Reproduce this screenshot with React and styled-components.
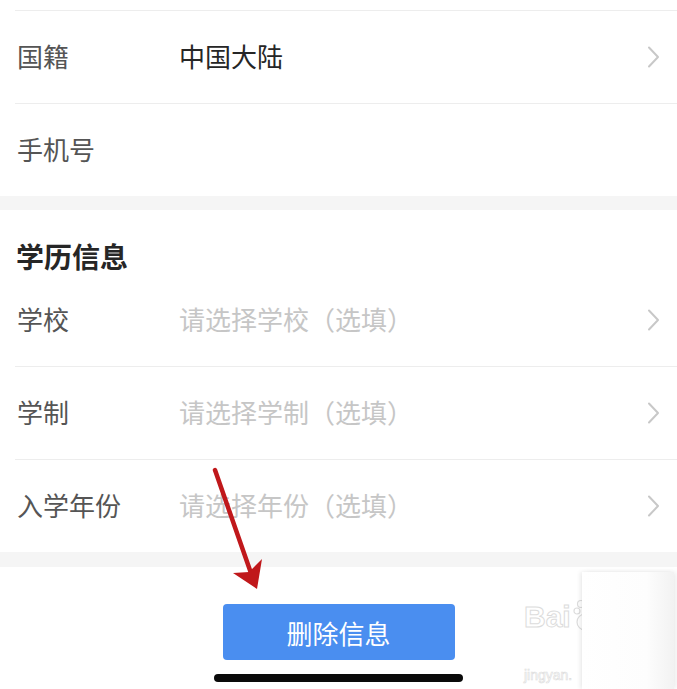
import React from "react";
import styled, { createGlobalStyle } from "styled-components";

const Global = createGlobalStyle`
  html, body { margin: 0; padding: 0; background: #ffffff; }
  body { font-family: "Noto Sans CJK SC", "Noto Sans", sans-serif; }
  * { box-sizing: border-box; }
`;

const Page = styled.div`
  position: relative;
  width: 677px;
  height: 689px;
  overflow: hidden;
  background: #ffffff;
  display: flex;
  flex-direction: column;
`;

const Section = styled.section`
  background: #ffffff;
  padding-top: ${(p) => p.$top || 0}px;
`;

const Gap = styled.div`
  height: ${(p) => p.$h}px;
  background: #f5f5f5;
`;

const Heading = styled.h2`
  margin: 0;
  padding: 30px 0 0 16px;
  height: 64px;
  font-size: 28px;
  line-height: 32px;
  font-weight: 700;
  color: #262626;
`;

const Row = styled.div`
  margin-left: 15px;
  padding: 0 17px 4px 2px;
  height: ${(p) => (p.$border ? 93 : 92)}px;
  border-top: ${(p) => (p.$border ? "1px solid #ededed" : "none")};
  display: flex;
  align-items: center;
`;

const Label = styled.span`
  width: 162px;
  flex: none;
  font-size: 26px;
  color: #555555;
`;

const Value = styled.span`
  flex: 1;
  font-size: 26px;
  color: ${(p) => (p.$placeholder ? "#c6c6c6" : "#262626")};
`;

const Chevron = styled.svg`
  width: 13px;
  height: 22px;
  flex: none;
  margin-top: 4px;
`;

const Footer = styled.div`
  flex: 1;
  display: flex;
  flex-direction: column;
  align-items: center;
  padding-top: 37px;
`;

const DeleteButton = styled.button`
  width: 232px;
  height: 56px;
  border: none;
  border-radius: 4px;
  background: #4a8ef0;
  color: #ffffff;
  font-family: inherit;
  font-size: 26px;
  padding: 0;
`;

const HomeBar = styled.div`
  margin-top: 14px;
  width: 249px;
  height: 8px;
  border-radius: 4px;
  background: #0a0a0a;
`;

const ArrowLayer = styled.svg`
  position: absolute;
  left: 0;
  top: 0;
  width: 677px;
  height: 689px;
  pointer-events: none;
`;

const Shade = styled.div`
  position: absolute;
  left: 582px;
  top: 572px;
  width: 92px;
  height: 117px;
  background: linear-gradient(90deg, #ffffff 0%, #fdfdfd 70%, #f2f2f2 100%);
  box-shadow: -2px 0 4px rgba(0, 0, 0, 0.08), 4px 0 6px rgba(0, 0, 0, 0.06);
`;

const Watermark = styled.div`
  position: absolute;
  left: 524px;
  top: 598px;
  display: flex;
  flex-direction: column;
  font-family: "Liberation Sans", sans-serif;
  color: #ffffff;
  -webkit-text-stroke: 1px #dcdcdc;
  line-height: 1;
`;

const WmLogo = styled.div`
  display: flex;
  align-items: flex-end;
`;

const WmBig = styled.span`
  font-size: 30px;
  font-weight: 700;
`;

const WmPaw = styled.svg`
  width: 24px;
  height: 34px;
  margin-left: 2px;
`;

const WmSmall = styled.span`
  font-size: 14px;
  margin-top: 36px;
  -webkit-text-stroke: 0.6px #dcdcdc;
`;

const ChevronIcon = () => (
  <Chevron viewBox="0 0 13 22">
    <path d="M2 1.5 L11 11 L2 20.5" fill="none" stroke="#c8c8c8" strokeWidth="2" strokeLinecap="round" strokeLinejoin="round" />
  </Chevron>
);

const Field = ({ label, value, placeholder, arrow, border }) => (
  <Row $border={border}>
    <Label>{label}</Label>
    <Value $placeholder={placeholder}>{value}</Value>
    {arrow && <ChevronIcon />}
  </Row>
);

export default function App() {
  return (
    <>
      <Global />
      <Page>
        <Section $top={10}>
          <Field label="国籍" value="中国大陆" arrow border />
          <Field label="手机号" value="" border />
        </Section>
        <Gap $h={14} />
        <Section>
          <Heading>学历信息</Heading>
          <Field label="学校" value="请选择学校（选填）" placeholder arrow />
          <Field label="学制" value="请选择学制（选填）" placeholder arrow border />
          <Field label="入学年份" value="请选择年份（选填）" placeholder arrow border />
        </Section>
        <Gap $h={15} />
        <Footer>
          <DeleteButton>删除信息</DeleteButton>
          <HomeBar />
        </Footer>
        <Watermark>
          <WmLogo>
            <WmBig>Bai</WmBig>
            <WmPaw viewBox="0 0 24 34">
              <g fill="none" stroke="#dcdcdc" strokeWidth="1.2">
                <circle cx="8" cy="6" r="3.5" />
                <circle cx="17" cy="5" r="3.5" />
                <circle cx="4" cy="13" r="3" />
                <circle cx="12" cy="24" r="8" />
              </g>
            </WmPaw>
          </WmLogo>
          <WmSmall>jingyan.</WmSmall>
        </Watermark>
        <Shade />
        <ArrowLayer viewBox="0 0 677 689">
          <line x1="215" y1="470" x2="252" y2="576" stroke="#c0181b" strokeWidth="4.5" strokeLinecap="round" />
          <polygon points="257,589 233,573 249,572 262,559" fill="#c0181b" />
        </ArrowLayer>
      </Page>
    </>
  );
}
